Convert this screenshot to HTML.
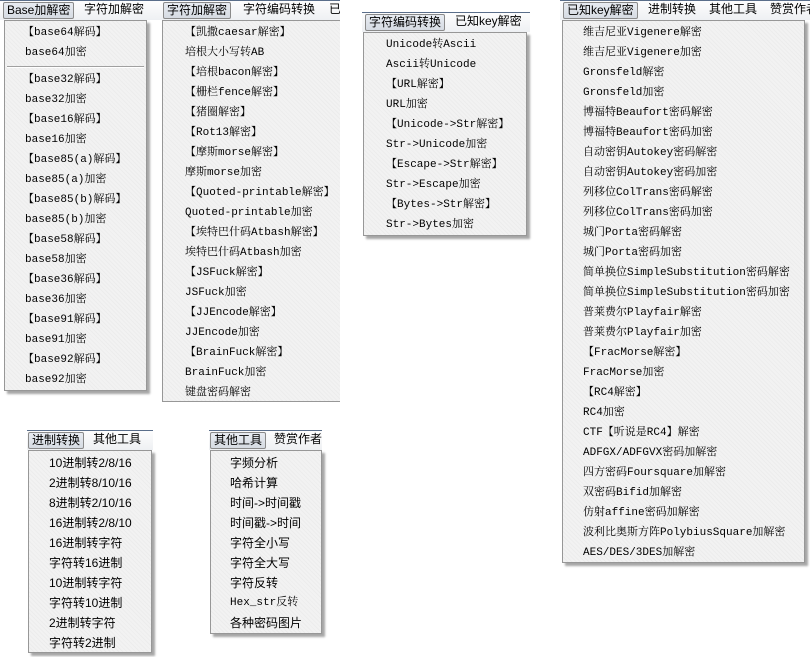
<!DOCTYPE html>
<html><head><meta charset="utf-8">
<style>
*{margin:0;padding:0;box-sizing:border-box}
body{width:810px;height:657px;background:#fff;position:relative;overflow:hidden;font-family:"Liberation Sans","Noto Sans CJK SC",sans-serif;}
.bar{position:absolute;height:20px;background:linear-gradient(#fdfdfd,#eef0f3);border-top:1px solid #5a6e8a;font-size:12px;color:#000;white-space:nowrap;overflow:hidden}
.bar span{position:absolute;top:1px;height:17px;line-height:15px;padding:0 3px}
.bar .sel{border:1px solid #8a8a8a;border-radius:2px;background:linear-gradient(#e8ecf2,#d6dbe3)}
.pan{position:absolute;border:1px solid #979797;background-color:#f2f2f2;
background-image:repeating-linear-gradient(45deg,rgba(0,0,0,0.025) 0 1px,transparent 1px 3px);
box-shadow:3px 3px 2px rgba(0,0,0,0.35);padding-top:2px;font-family:"Liberation Mono","Noto Serif CJK SC",monospace;font-size:11px;color:#000;white-space:nowrap;overflow:hidden}
.pan div{height:20px;line-height:20px}
.sep{height:7px!important;position:relative}
.sep:after{content:"";position:absolute;left:2px;right:2px;top:3px;border-top:1px solid #a0a0a0;border-bottom:1px solid #fff}
.cj{font-family:"Liberation Sans","Noto Sans CJK SC",sans-serif;font-size:12px}
</style></head><body>

<!-- menu 1 -->
<div class="bar" style="left:0;top:0;width:160px"><span class="sel" style="left:3px">Base加解密</span><span style="left:81px">字符加解密</span></div>
<div class="pan" style="left:4px;top:20px;width:143px;height:371px">
<div style="padding-left:18px">【base64解码】</div>
<div style="padding-left:20px">base64加密</div>
<div class="sep"></div>
<div style="padding-left:18px">【base32解码】</div>
<div style="padding-left:20px">base32加密</div>
<div style="padding-left:18px">【base16解码】</div>
<div style="padding-left:20px">base16加密</div>
<div style="padding-left:18px">【base85(a)解码】</div>
<div style="padding-left:20px">base85(a)加密</div>
<div style="padding-left:18px">【base85(b)解码】</div>
<div style="padding-left:20px">base85(b)加密</div>
<div style="padding-left:18px">【base58解码】</div>
<div style="padding-left:20px">base58加密</div>
<div style="padding-left:18px">【base36解码】</div>
<div style="padding-left:20px">base36加密</div>
<div style="padding-left:18px">【base91解码】</div>
<div style="padding-left:20px">base91加密</div>
<div style="padding-left:18px">【base92解码】</div>
<div style="padding-left:20px">base92加密</div>
</div>

<!-- menu 2 -->
<div class="bar" style="left:160px;top:0;width:180px"><span class="sel" style="left:3px">字符加解密</span><span style="left:80px">字符编码转换</span><span style="left:166px">已</span></div>
<div class="pan" style="left:162px;top:20px;width:190px;height:382px;padding-left:22px;box-shadow:none">
<div>【凯撒caesar解密】</div>
<div>培根大小写转AB</div>
<div>【培根bacon解密】</div>
<div>【栅栏fence解密】</div>
<div>【猪圈解密】</div>
<div>【Rot13解密】</div>
<div>【摩斯morse解密】</div>
<div>摩斯morse加密</div>
<div>【Quoted-printable解密】</div>
<div>Quoted-printable加密</div>
<div>【埃特巴什码Atbash解密】</div>
<div>埃特巴什码Atbash加密</div>
<div>【JSFuck解密】</div>
<div>JSFuck加密</div>
<div>【JJEncode解密】</div>
<div>JJEncode加密</div>
<div>【BrainFuck解密】</div>
<div>BrainFuck加密</div>
<div>键盘密码解密</div>
</div>
<div style="position:absolute;left:340px;top:0;width:30px;height:420px;background:#fff"></div>

<!-- menu 3 -->
<div class="bar" style="left:362px;top:12px;width:168px"><span class="sel" style="left:3px">字符编码转换</span><span style="left:90px">已知key解密</span></div>
<div class="pan" style="left:363px;top:32px;width:164px;height:204px;padding-left:22px">
<div>Unicode转Ascii</div>
<div>Ascii转Unicode</div>
<div>【URL解密】</div>
<div>URL加密</div>
<div>【Unicode->Str解密】</div>
<div>Str->Unicode加密</div>
<div>【Escape->Str解密】</div>
<div>Str->Escape加密</div>
<div>【Bytes->Str解密】</div>
<div>Str->Bytes加密</div>
</div>

<!-- menu 4 -->
<div class="bar" style="left:560px;top:0;width:250px"><span class="sel" style="left:3px">已知key解密</span><span style="left:85px">进制转换</span><span style="left:146px">其他工具</span><span style="left:207px">赞赏作者</span></div>
<div class="pan" style="left:562px;top:20px;width:243px;height:543px;padding-left:20px">
<div>维吉尼亚Vigenere解密</div>
<div>维吉尼亚Vigenere加密</div>
<div>Gronsfeld解密</div>
<div>Gronsfeld加密</div>
<div>博福特Beaufort密码解密</div>
<div>博福特Beaufort密码加密</div>
<div>自动密钥Autokey密码解密</div>
<div>自动密钥Autokey密码加密</div>
<div>列移位ColTrans密码解密</div>
<div>列移位ColTrans密码加密</div>
<div>城门Porta密码解密</div>
<div>城门Porta密码加密</div>
<div>简单换位SimpleSubstitution密码解密</div>
<div>简单换位SimpleSubstitution密码加密</div>
<div>普莱费尔Playfair解密</div>
<div>普莱费尔Playfair加密</div>
<div>【FracMorse解密】</div>
<div>FracMorse加密</div>
<div>【RC4解密】</div>
<div>RC4加密</div>
<div>CTF【听说是RC4】解密</div>
<div>ADFGX/ADFGVX密码加解密</div>
<div>四方密码Foursquare加解密</div>
<div>双密码Bifid加解密</div>
<div>仿射affine密码加解密</div>
<div>波利比奥斯方阵PolybiusSquare加解密</div>
<div>AES/DES/3DES加解密</div>
</div>

<!-- menu 5 -->
<div class="bar" style="left:27px;top:430px;width:126px"><span class="sel" style="left:1px">进制转换</span><span style="left:63px">其他工具</span></div>
<div class="pan cj" style="left:28px;top:450px;width:124px;height:203px;padding-left:20px">
<div>10进制转2/8/16</div>
<div>2进制转8/10/16</div>
<div>8进制转2/10/16</div>
<div>16进制转2/8/10</div>
<div>16进制转字符</div>
<div>字符转16进制</div>
<div>10进制转字符</div>
<div>字符转10进制</div>
<div>2进制转字符</div>
<div>字符转2进制</div>
</div>

<!-- menu 6 -->
<div class="bar" style="left:209px;top:430px;width:113px"><span class="sel" style="left:1px">其他工具</span><span style="left:62px">赞赏作者</span></div>
<div class="pan cj" style="left:210px;top:450px;width:112px;height:184px;padding-left:19px">
<div>字频分析</div>
<div>哈希计算</div>
<div>时间->时间戳</div>
<div>时间戳->时间</div>
<div>字符全小写</div>
<div>字符全大写</div>
<div>字符反转</div>
<div style="font-family:'Liberation Mono','Noto Serif CJK SC',monospace;font-size:11px">Hex_str反转</div>
<div>各种密码图片</div>
</div>

</body></html>
